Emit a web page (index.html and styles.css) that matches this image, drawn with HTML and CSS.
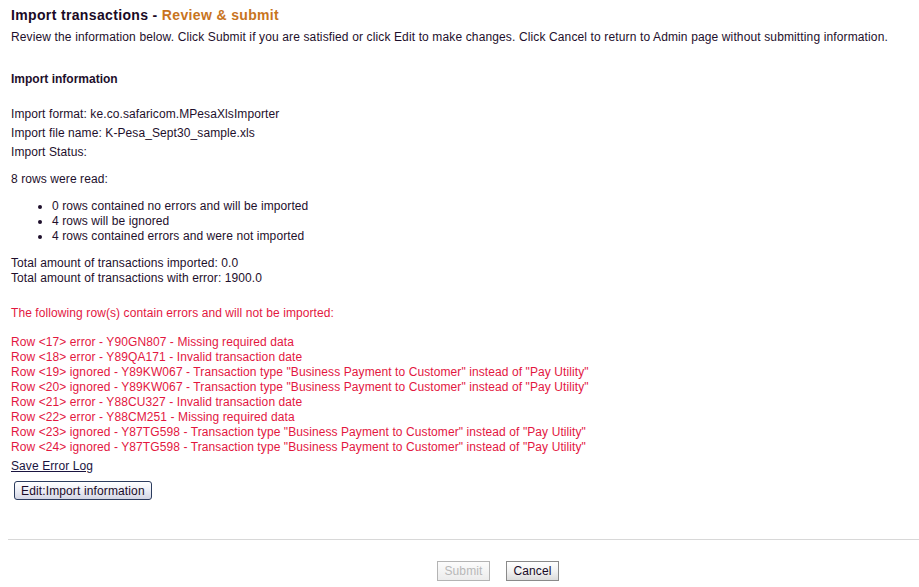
FILE: index.html
```html
<!DOCTYPE html>
<html>
<head>
<meta charset="utf-8">
<title>Import transactions - Review &amp; submit</title>
<link rel="stylesheet" href="styles.css">
</head>
<body>
<div class="page">
  <h1 class="title">Import transactions - <span class="accent">Review &amp; submit</span></h1>
  <p class="intro">Review the information below. Click Submit if you are satisfied or click Edit to make changes. Click Cancel to return to Admin page without submitting information.</p>

  <h2 class="section">Import information</h2>

  <div class="info">
    <div class="info-row">Import format: ke.co.safaricom.MPesaXlsImporter</div>
    <div class="info-row">Import file name: K-Pesa_Sept30_sample.xls</div>
    <div class="info-row">Import Status:</div>
  </div>

  <p class="rows-read">8 rows were read:</p>
  <ul class="summary">
    <li>0 rows contained no errors and will be imported</li>
    <li>4 rows will be ignored</li>
    <li>4 rows contained errors and were not imported</li>
  </ul>

  <div class="totals">
    <div>Total amount of transactions imported: 0.0</div>
    <div>Total amount of transactions with error: 1900.0</div>
  </div>

  <p class="err-head">The following row(s) contain errors and will not be imported:</p>
  <div class="err-list">
    <div>Row &lt;17&gt; error - Y90GN807 - Missing required data</div>
    <div>Row &lt;18&gt; error - Y89QA171 - Invalid transaction date</div>
    <div>Row &lt;19&gt; ignored - Y89KW067 - Transaction type "Business Payment to Customer" instead of "Pay Utility"</div>
    <div>Row &lt;20&gt; ignored - Y89KW067 - Transaction type "Business Payment to Customer" instead of "Pay Utility"</div>
    <div>Row &lt;21&gt; error - Y88CU327 - Invalid transaction date</div>
    <div>Row &lt;22&gt; error - Y88CM251 - Missing required data</div>
    <div>Row &lt;23&gt; ignored - Y87TG598 - Transaction type "Business Payment to Customer" instead of "Pay Utility"</div>
    <div>Row &lt;24&gt; ignored - Y87TG598 - Transaction type "Business Payment to Customer" instead of "Pay Utility"</div>
  </div>

  <a class="save-log" href="#">Save Error Log</a>
  <div class="edit-wrap"><button class="btn btn-edit" type="button">Edit:Import information</button></div>
</div>

<hr class="divider">

<div class="actions">
  <button class="btn btn-plain" type="button" disabled>Submit</button>
  <button class="btn btn-plain" type="button">Cancel</button>
</div>
</body>
</html>
```

FILE: styles.css
```css
html, body {
  margin: 0;
  padding: 0;
  background: #ffffff;
}

body {
  padding: 0 0 0 8px;
  font-family: "Liberation Sans", Arial, sans-serif;
  font-size: 12px;
  line-height: 15px;
  letter-spacing: 0.09px;
  color: #1e0f2c;
}

.page {
  padding-left: 3px;
  padding-top: 7px;
}

.title {
  margin: 0;
  font-size: 14px;
  line-height: 17px;
  font-weight: bold;
  letter-spacing: 0.35px;
  color: #1a0a26;
}

.accent {
  color: #c8741e;
}

.intro {
  margin: 6px 0 0 0;
  letter-spacing: 0.13px;
}

.section {
  margin: 27px 0 0 0;
  font-size: 12px;
  line-height: 15px;
  font-weight: bold;
  letter-spacing: 0;
}

.info {
  margin-top: 18px;
}

.info-row {
  line-height: 19px;
}

.rows-read {
  margin: 10px 0 0 0;
}

.summary {
  margin: 12px 0 0 0;
  padding-left: 41px;
  list-style: disc;
}

.totals {
  margin-top: 12px;
}

.err-head {
  margin: 20px 0 0 0;
  color: #e3173f;
}

.err-list {
  margin-top: 14px;
  color: #e3173f;
}

.save-log {
  display: inline-block;
  margin-top: 4px;
  color: #1a1440;
  text-decoration: underline;
}

.edit-wrap {
  margin-top: 7px;
  padding-left: 3px;
}

.btn {
  font-family: "Liberation Sans", Arial, sans-serif;
  font-size: 12px;
  line-height: 14px;
  letter-spacing: 0.13px;
  margin: 0;
  cursor: default;
}

.btn-edit {
  height: 19px;
  padding: 1px 6px;
  border: 1px solid #2c3c5e;
  border-radius: 3px;
  background: linear-gradient(#ffffff, #eceef6 50%, #d4d6e4);
  color: #1a0a26;
}

.divider {
  margin: 39px -8px 0 0;
  height: 0;
  border: 0;
  border-top: 1px solid #d8d8d8;
}

.actions {
  display: flex;
  gap: 16px;
  padding-left: 429px;
  margin-top: 21px;
}

.btn-plain {
  height: 20px;
  width: 53px;
  padding: 0;
  border: 1px solid #8a8a8a;
  border-radius: 0;
  background: linear-gradient(#ffffff, #f2f2f2 50%, #dcdcdc);
  color: #1a0a26;
}

.btn-plain:disabled {
  color: #b8b8b8;
  border-color: #b4b4b4;
  background: linear-gradient(#fcfcfc, #ececec);
}
```
